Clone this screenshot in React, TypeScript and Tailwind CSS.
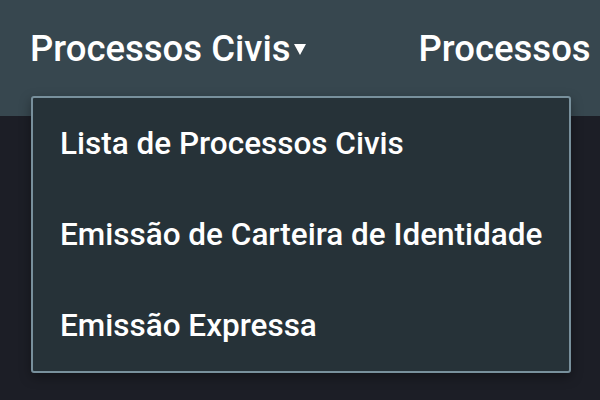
import React from 'react';

const items = [
  'Lista de Processos Civis',
  'Emissão de Carteira de Identidade',
  'Emissão Expressa',
];

const App: React.FC = () => {
  return (
    <div className="w-[600px] h-[400px] overflow-hidden bg-[#1c1e26] font-['Roboto',sans-serif]">
      <header className="h-[116px] bg-[#37474f] flex items-start pt-[27px] pl-[30px] gap-[113px]">
        <div className="relative">
          <button className="flex items-center text-white text-[36.5px] font-medium leading-[44px] whitespace-nowrap">
            Processos Civis
            <svg className="ml-[3px] mt-[1px]" width="12" height="11" viewBox="0 0 12 11">
              <path d="M0 0 H12 L6 11 Z" fill="#ffffff" />
            </svg>
          </button>
          <div className="absolute left-[1px] top-[69px] w-[540px] bg-[#263238] border-2 border-[#78909c] rounded-[3px] shadow-[0_4px_12px_rgba(0,0,0,0.35)] z-10">
            {items.map(item => (
              <a
                key={item}
                href="#"
                className="flex items-center h-[91px] pl-[27px] text-white text-[31.5px] font-medium whitespace-nowrap"
              >
                {item}
              </a>
            ))}
          </div>
        </div>
        <button className="text-white text-[36.5px] font-medium leading-[44px] whitespace-nowrap">
          Processos
        </button>
      </header>
    </div>
  );
};

export default App;
